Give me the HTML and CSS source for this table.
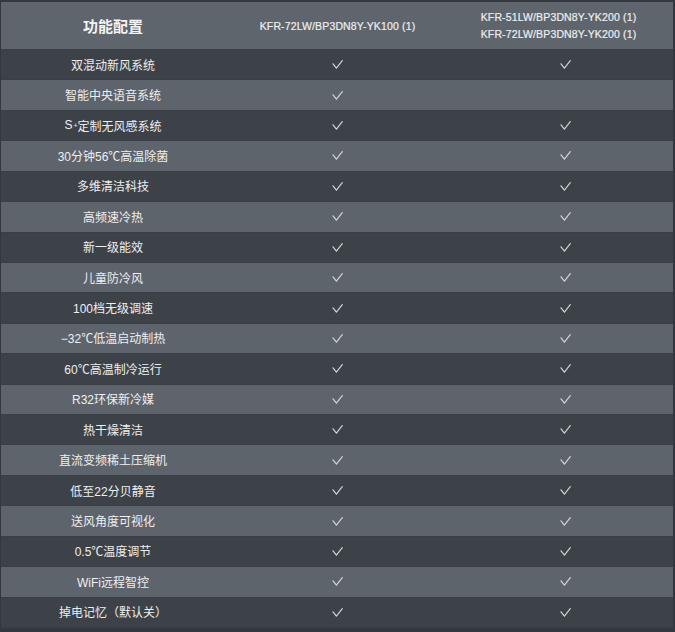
FILE: index.html
```html
<!DOCTYPE html>
<html lang="zh">
<head>
<meta charset="utf-8">
<link rel="stylesheet" href="styles.css">
</head>
<body>
<svg class="defs" width="0" height="0" aria-hidden="true">
  <defs>
    <symbol id="chk" viewBox="0 0 11 9">
      <polyline points="1,3.8 4.4,8.2 10.3,0.7" fill="none" stroke="currentColor" stroke-width="1.15" stroke-linecap="round" stroke-linejoin="round"/>
    </symbol>
  </defs>
</svg>
<div class="table">
  <div class="row head">
    <div class="cell title">功能配置</div>
    <div class="cell model">KFR-72LW/BP3DN8Y-YK100 (1)</div>
    <div class="cell model">KFR-51LW/BP3DN8Y-YK200 (1)<br>KFR-72LW/BP3DN8Y-YK200 (1)</div>
  </div>
  <div class="row dark"><div class="cell label">双混动新风系统</div><div class="cell chk"><svg class="ic"><use href="#chk"/></svg></div><div class="cell chk"><svg class="ic"><use href="#chk"/></svg></div></div>
  <div class="row light"><div class="cell label">智能中央语音系统</div><div class="cell chk"><svg class="ic"><use href="#chk"/></svg></div><div class="cell chk"></div></div>
  <div class="row dark"><div class="cell label">S<sup class="sup">+</sup>定制无风感系统</div><div class="cell chk"><svg class="ic"><use href="#chk"/></svg></div><div class="cell chk"><svg class="ic"><use href="#chk"/></svg></div></div>
  <div class="row light"><div class="cell label">30分钟56℃高温除菌</div><div class="cell chk"><svg class="ic"><use href="#chk"/></svg></div><div class="cell chk"><svg class="ic"><use href="#chk"/></svg></div></div>
  <div class="row dark"><div class="cell label">多维清洁科技</div><div class="cell chk"><svg class="ic"><use href="#chk"/></svg></div><div class="cell chk"><svg class="ic"><use href="#chk"/></svg></div></div>
  <div class="row light"><div class="cell label">高频速冷热</div><div class="cell chk"><svg class="ic"><use href="#chk"/></svg></div><div class="cell chk"><svg class="ic"><use href="#chk"/></svg></div></div>
  <div class="row dark"><div class="cell label">新一级能效</div><div class="cell chk"><svg class="ic"><use href="#chk"/></svg></div><div class="cell chk"><svg class="ic"><use href="#chk"/></svg></div></div>
  <div class="row light"><div class="cell label">儿童防冷风</div><div class="cell chk"><svg class="ic"><use href="#chk"/></svg></div><div class="cell chk"><svg class="ic"><use href="#chk"/></svg></div></div>
  <div class="row dark"><div class="cell label">100档无级调速</div><div class="cell chk"><svg class="ic"><use href="#chk"/></svg></div><div class="cell chk"><svg class="ic"><use href="#chk"/></svg></div></div>
  <div class="row light"><div class="cell label">−32℃低温启动制热</div><div class="cell chk"><svg class="ic"><use href="#chk"/></svg></div><div class="cell chk"><svg class="ic"><use href="#chk"/></svg></div></div>
  <div class="row dark"><div class="cell label">60℃高温制冷运行</div><div class="cell chk"><svg class="ic"><use href="#chk"/></svg></div><div class="cell chk"><svg class="ic"><use href="#chk"/></svg></div></div>
  <div class="row light"><div class="cell label">R32环保新冷媒</div><div class="cell chk"><svg class="ic"><use href="#chk"/></svg></div><div class="cell chk"><svg class="ic"><use href="#chk"/></svg></div></div>
  <div class="row dark"><div class="cell label">热干燥清洁</div><div class="cell chk"><svg class="ic"><use href="#chk"/></svg></div><div class="cell chk"><svg class="ic"><use href="#chk"/></svg></div></div>
  <div class="row light"><div class="cell label">直流变频稀土压缩机</div><div class="cell chk"><svg class="ic"><use href="#chk"/></svg></div><div class="cell chk"><svg class="ic"><use href="#chk"/></svg></div></div>
  <div class="row dark"><div class="cell label">低至22分贝静音</div><div class="cell chk"><svg class="ic"><use href="#chk"/></svg></div><div class="cell chk"><svg class="ic"><use href="#chk"/></svg></div></div>
  <div class="row light"><div class="cell label">送风角度可视化</div><div class="cell chk"><svg class="ic"><use href="#chk"/></svg></div><div class="cell chk"><svg class="ic"><use href="#chk"/></svg></div></div>
  <div class="row dark"><div class="cell label">0.5℃温度调节</div><div class="cell chk"><svg class="ic"><use href="#chk"/></svg></div><div class="cell chk"><svg class="ic"><use href="#chk"/></svg></div></div>
  <div class="row light"><div class="cell label">WiFi远程智控</div><div class="cell chk"><svg class="ic"><use href="#chk"/></svg></div><div class="cell chk"><svg class="ic"><use href="#chk"/></svg></div></div>
  <div class="row dark"><div class="cell label">掉电记忆（默认关）</div><div class="cell chk"><svg class="ic"><use href="#chk"/></svg></div><div class="cell chk"><svg class="ic"><use href="#chk"/></svg></div></div>
</div>
</body>
</html>
```

FILE: styles.css
```css
html, body {
  margin: 0;
  padding: 0;
  background: #33383e;
}
body {
  width: 675px;
  height: 632px;
  overflow: hidden;
  font-family: "Liberation Sans", "Noto Sans CJK SC", sans-serif;
}
.defs {
  position: absolute;
  width: 0;
  height: 0;
}
.table {
  box-sizing: border-box;
  height: 632px;
  padding: 2px 2px 4px 1px;
  display: grid;
  grid-template-rows: 48px repeat(19, 1fr);
}
.row {
  display: grid;
  grid-template-columns: 224px 225px 1fr;
  align-items: center;
  box-shadow: inset 0 -1px 0 #3a3f45;
}
.head {
  background: #5f656c;
}
.dark {
  background: #3d4249;
}
.light {
  background: #5e646b;
}
.cell {
  height: 100%;
  display: flex;
  align-items: center;
  justify-content: center;
  text-align: center;
}
.title {
  font-family: "Noto Sans CJK SC", sans-serif;
  font-weight: 700;
  font-size: 15px;
  color: #f4f4f4;
  padding-bottom: 2px;
}
.model {
  font-family: "Liberation Sans", "Noto Sans CJK SC", sans-serif;
  font-size: 10.5px;
  line-height: 17px;
  color: #eeeff0;
  letter-spacing: 0.15px;
  -webkit-text-stroke: 0.2px #eeeff0;
}
.model:last-child {
  padding-right: 6px;
}
.label {
  font-family: "Liberation Sans", "Noto Sans CJK SC", sans-serif;
  font-size: 12px;
  color: #eeeff0;
  padding-bottom: 2px;
}
.sup {
  font-size: 7px;
  vertical-align: 5px;
  margin-left: 1px;
}
.chk {
  color: #d4d7da;
  padding-bottom: 1px;
}
.chk:last-child {
  padding-left: 8px;
}
.ic {
  width: 11px;
  height: 9px;
}
```
